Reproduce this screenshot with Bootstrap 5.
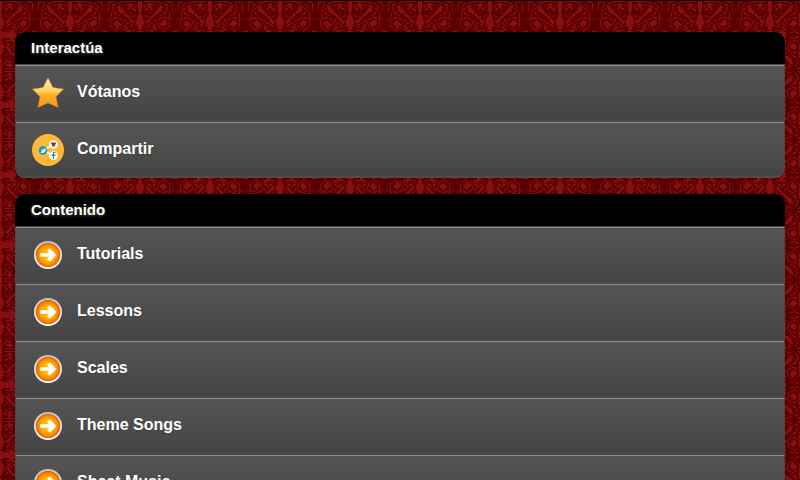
<!DOCTYPE html>
<html lang="es">
<head>
<meta charset="utf-8">
<meta name="viewport" content="width=device-width, initial-scale=1">
<title>Interactúa</title>
<link href="https://cdn.jsdelivr.net/npm/bootstrap@5.3.0/dist/css/bootstrap.min.css" rel="stylesheet">
<style>
body{
  font-family:"Liberation Sans",Arial,sans-serif;
  border-top:1px solid #000;
  background-color:#5b0000;
  background-image:url("data:image/svg+xml,%3Csvg xmlns='http://www.w3.org/2000/svg' xmlns:xlink='http://www.w3.org/1999/xlink' width='70' height='70' shape-rendering='crispEdges'%3E%3Cdefs%3E%3Cg id='q' fill='none' stroke='%23870f0f'%3E%3Cpath fill='%23870f0f' stroke='none' d='M0 0H2V9L1 14 3 18 4 23 2 27 1 31 5 32 14 31 16 34V35H0zM5 23L11 16 16 12 19 7 23 5 22 11 17 14 12 18 8 24zM8 3l5 1-2 3-4-1zM19 24l5-4 3 3-4 5z'/%3E%3Cpath d='M4 1C12 1 17 1 22 4M25 3C29 7 28 12 23 14M27 1l5 2v8M29 12v6l4 2M17 21l5-4 7 3 1 5-5 5-6-3zM5 11c2-4 6-4 8-2M7 28c2-5 6-7 8-3s-3 6-5 5M20 33c3-2 7-1 9 1M31 34c1-2 2-3 4-3M14 19l2 3M3 5l3 3M4 14l4 4M12 27l5 3M24 8l3 3M20 16l6-3M5 30h8'/%3E%3Cpath stroke-dasharray='2 2' d='M6 9h8M5 16h5M4 20h4M13 23v6M17 9v4M9 26h7M24 17h5M9 12h3M5 5v6M14 5h6M3 25h5'/%3E%3C/g%3E%3Cg id='h'%3E%3Cuse xlink:href='%23q'/%3E%3Cuse xlink:href='%23q' transform='translate(70 0) scale(-1 1)'/%3E%3C/g%3E%3C/defs%3E%3Crect width='70' height='70' fill='%235b0000'/%3E%3Cuse xlink:href='%23h'/%3E%3Cuse xlink:href='%23h' transform='translate(0 70) scale(1 -1)'/%3E%3C/svg%3E");
  background-position:0 0;
}
.page-body{padding:31px 15px 15px}
.menu-panel{border-radius:10px;overflow:hidden;background:#484848;margin-bottom:16px}
.menu-title{font-size:15px;line-height:32px;height:33px;padding:0 16px;background:#000;color:#fff;font-weight:700;text-shadow:0 1px 3px #555;border-bottom:1px solid #484848}
.menu-row{height:57px;margin:0 1px;padding:0 16px 2px;gap:13px;color:#fff;font-size:16px;line-height:24px;font-weight:700;border-top:1px solid #8d8d8d;background:linear-gradient(#555,#444 96%,#4b4b4b 96%);text-shadow:0 1px 1px #444}
.menu-row:hover{color:#fff}
.menu-row:last-child{height:56px}
.menu-row svg{width:32px;height:32px;flex:none}
.menu-label{padding-bottom:2px}
</style>
<script src="https://cdn.jsdelivr.net/npm/bootstrap@5.3.0/dist/js/bootstrap.bundle.min.js"></script>
</head>
<body>
<main class="page-body">
  <svg class="visually-hidden" aria-hidden="true">
    <defs>
      <linearGradient id="metal" x2="0" y2="1"><stop stop-color="#c4c4c4"/><stop offset=".5" stop-color="#e4e4e4"/><stop offset="1" stop-color="#fff"/></linearGradient>
      <radialGradient id="amber" cy=".5"><stop stop-color="#ffd000"/><stop offset=".6" stop-color="#ffa800"/><stop offset=".85" stop-color="#fb8200"/><stop offset="1" stop-color="#e05a00"/></radialGradient>
      <linearGradient id="gold" x2="0" y2="1"><stop stop-color="#fff0a8"/><stop offset=".48" stop-color="#ffcb5c"/><stop offset=".54" stop-color="#ffb32c"/><stop offset="1" stop-color="#ff920d"/></linearGradient>
    </defs>
    <symbol id="arrow" viewBox="0 0 32 32"><circle cx="16" cy="16" r="14" fill="url(#metal)"/><circle cx="16" cy="16" r="12" fill="url(#amber)" stroke="#d86a10" stroke-width=".5"/><path d="M8 14.200h9l-2-2.700 3-2L24.500 16 18 22.500l-3-2 2-2.700H8z" fill="#fff"/></symbol>
  </svg>
  <section class="menu-panel">
    <h2 class="menu-title m-0">Interactúa</h2>
    <a href="#votar" class="menu-row d-flex align-items-center text-decoration-none">
      <svg viewBox="0 0 32 32" aria-hidden="true"><path d="M16 .8l5 9.700 10.600 1.500-7.600 7.800 2.200 10.700L16 26l-10.200 4.500L8 19.800.4 12 11 10.500z" fill="url(#gold)" stroke="#c98420" stroke-width=".5" stroke-linejoin="round"/></svg>
      <span class="menu-label">Vótanos</span>
    </a>
    <a href="#compartir" class="menu-row d-flex align-items-center text-decoration-none">
      <svg viewBox="0 0 32 32" aria-hidden="true"><circle cx="16" cy="16" r="16" fill="#fbb937"/><path d="M21.500 10.500L11 16.500l10.500 5" fill="none" stroke="#fff" stroke-width="1.500"/><circle cx="11" cy="16.500" r="4.300" fill="#139dca"/><path d="M8 18.500l2-1-1-2 2 .500 1-1.500 2 .500-.500 2-2 2z" fill="#fff"/><circle cx="21.500" cy="10.500" r="4.300" fill="#fff"/><path d="M19 8.500h5v2h-1v2h-3v-2h-1z" fill="#7a4b3c"/><circle cx="21.500" cy="21.500" r="4.300" fill="#fff"/><path d="M21 25v-3h-1.500v-1.500H21V18h2.500v1H22v1.500h1.500V22H22v3z" fill="#1b88b5"/></svg>
      <span class="menu-label">Compartir</span>
    </a>
  </section>
  <section class="menu-panel">
    <h2 class="menu-title m-0">Contenido</h2>
    <a href="#tutorials" class="menu-row d-flex align-items-center text-decoration-none"><svg aria-hidden="true"><use href="#arrow"/></svg><span class="menu-label">Tutorials</span></a>
    <a href="#lessons" class="menu-row d-flex align-items-center text-decoration-none"><svg aria-hidden="true"><use href="#arrow"/></svg><span class="menu-label">Lessons</span></a>
    <a href="#scales" class="menu-row d-flex align-items-center text-decoration-none"><svg aria-hidden="true"><use href="#arrow"/></svg><span class="menu-label">Scales</span></a>
    <a href="#theme-songs" class="menu-row d-flex align-items-center text-decoration-none"><svg aria-hidden="true"><use href="#arrow"/></svg><span class="menu-label">Theme Songs</span></a>
    <a href="#sheet-music" class="menu-row d-flex align-items-center text-decoration-none"><svg aria-hidden="true"><use href="#arrow"/></svg><span class="menu-label">Sheet Music</span></a>
  </section>
</main>
</body>
</html>
